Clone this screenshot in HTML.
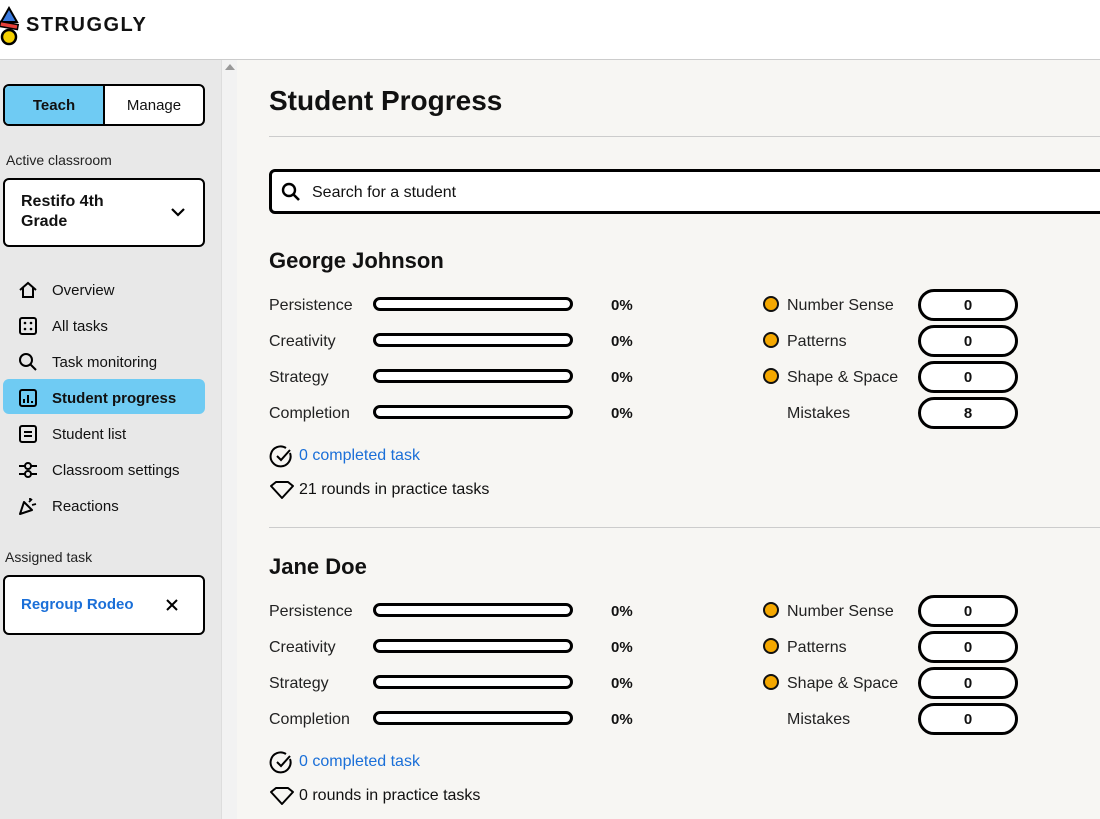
<!DOCTYPE html>
<html><head><style>
*{box-sizing:border-box;margin:0;padding:0}
body{width:1100px;height:819px;overflow:hidden;font-family:"Liberation Sans",sans-serif;color:#111;background:#f7f6f3;position:relative}
.a{position:absolute}
.hdr{left:0;top:0;width:1100px;height:60px;background:#fff;border-bottom:1px solid #ccc}
.side{left:0;top:60px;width:221px;height:759px;background:#e8e8e8}
.sb{left:221px;top:60px;width:16px;height:759px;background:#f2f2f2;border-left:1px solid #ddd}
.main{left:237px;top:60px;width:863px;height:759px;background:#f7f6f3}
.nav{left:18px;font-size:15px;display:flex;align-items:center;gap:14px;margin-top:1px}
.lbl{font-size:16px;color:#222;margin-top:2px}
.bar{width:200px;height:14px;border:3px solid #000;border-radius:8px;background:#fff}
.pct{font-size:15px;font-weight:bold;margin-top:1px}
.dot{width:16px;height:16px;border-radius:50%;background:#f5a800;border:2.5px solid #111;margin-top:-1px}
.pill{width:100px;height:32px;border:3px solid #000;border-radius:16px;background:#fff;text-align:center;line-height:27px;font-weight:bold;font-size:15px}
</style></head><body>
<div class="a hdr"></div>
<svg class="a" style="left:0;top:6px" width="20" height="40" viewBox="0 0 20 40"><polygon points="9,2 17,16 1,16" fill="#3b7be0" stroke="#000" stroke-width="2"/><rect x="0" y="17" width="18" height="5" fill="#e5403a" stroke="#000" stroke-width="1.5" transform="rotate(10 9 19)"/><circle cx="9" cy="31" r="7" fill="#f5d000" stroke="#000" stroke-width="2.5"/></svg>
<div class="a" style="left:26px;top:14px;font-size:20px;font-weight:900;letter-spacing:1.5px">STRUGGLY</div>
<div class="a side"></div>
<div class="a sb"><div style="margin:4px auto 0;width:0;height:0;border-left:5px solid transparent;border-right:5px solid transparent;border-bottom:6px solid #999"></div></div>
<div class="a main"></div>

<div class="a" style="left:3px;top:84px;width:202px;height:42px;border:2px solid #000;border-radius:6px;display:flex;overflow:hidden;background:#fff">
<div style="width:100px;background:#6fcbf3;border-right:2px solid #000;text-align:center;line-height:39px;font-weight:bold;font-size:15px">Teach</div>
<div style="flex:1;text-align:center;line-height:39px;font-size:15px">Manage</div></div>
<div class="a" style="left:6px;top:152px;font-size:14px;color:#222">Active classroom</div>
<div class="a" style="left:3px;top:178px;width:202px;height:69px;border:2px solid #000;border-radius:6px;background:#fff">
<div style="position:absolute;left:16px;top:12px;font-weight:bold;font-size:16px;line-height:20px">Restifo 4th<br>Grade</div>
<svg style="position:absolute;left:165px;top:26px" width="16" height="12" viewBox="0 0 16 12"><path d="M2 3l6 6 6-6" fill="none" stroke="#000" stroke-width="2.2"/></svg></div>

<div class="a" style="left:3px;top:379px;width:202px;height:35px;background:#6fcbf3;border-radius:6px"></div>
<div class="a nav" style="top:279px"><svg width="20" height="20" viewBox="0 0 20 20"><path d="M2 10L10 3l8 7M5 8v9h10V8" fill="none" stroke="#000" stroke-width="2"/></svg>Overview</div>
<div class="a nav" style="top:315px"><svg width="20" height="20" viewBox="0 0 20 20"><rect x="2" y="2" width="16" height="16" rx="2" fill="none" stroke="#000" stroke-width="2"/><circle cx="7" cy="7" r="1.3"/><circle cx="13" cy="7" r="1.3"/><circle cx="7" cy="13" r="1.3"/><circle cx="13" cy="13" r="1.3"/></svg>All tasks</div>
<div class="a nav" style="top:351px"><svg width="20" height="20" viewBox="0 0 20 20"><circle cx="8" cy="8" r="6" fill="none" stroke="#000" stroke-width="2"/><path d="M12.5 12.5L18 18" stroke="#000" stroke-width="2"/></svg>Task monitoring</div>
<div class="a nav" style="top:387px;font-weight:bold"><svg width="20" height="20" viewBox="0 0 20 20"><rect x="2" y="2" width="16" height="16" rx="2" fill="none" stroke="#000" stroke-width="2"/><path d="M6 15v-4M10 15V7M14 15v-2" stroke="#000" stroke-width="2"/></svg>Student progress</div>
<div class="a nav" style="top:423px"><svg width="20" height="20" viewBox="0 0 20 20"><rect x="2" y="2" width="16" height="16" rx="2" fill="none" stroke="#000" stroke-width="2"/><path d="M6 8h8M6 12h8" stroke="#000" stroke-width="2"/></svg>Student list</div>
<div class="a nav" style="top:459px"><svg width="20" height="20" viewBox="0 0 20 20"><path d="M1 6h18M1 14h18" stroke="#000" stroke-width="2"/><circle cx="10" cy="6" r="3" fill="#e8e8e8" stroke="#000" stroke-width="2"/><circle cx="10" cy="14" r="3" fill="#e8e8e8" stroke="#000" stroke-width="2"/></svg>Classroom settings</div>
<div class="a nav" style="top:495px"><svg width="20" height="20" viewBox="0 0 20 20"><path d="M2 18l4-12 8 8z" fill="none" stroke="#000" stroke-width="2" stroke-linejoin="round"/><path d="M11 6l3-3M14 9l4-1M12 2v2" stroke="#000" stroke-width="1.8"/></svg>Reactions</div>

<div class="a" style="left:5px;top:549px;font-size:14px;color:#222">Assigned task</div>
<div class="a" style="left:3px;top:575px;width:202px;height:60px;border:2px solid #000;border-radius:6px;background:#fff">
<div style="position:absolute;left:16px;top:19px;font-weight:bold;font-size:15px;color:#1a6fd8">Regroup Rodeo</div>
<svg style="position:absolute;left:161px;top:22px" width="12" height="12" viewBox="0 0 12 12"><path d="M1 1l10 10M11 1L1 11" stroke="#000" stroke-width="2"/></svg></div>

<div class="a" style="left:269px;top:85px;font-size:28px;font-weight:bold">Student Progress</div>
<div class="a" style="left:269px;top:136px;width:831px;height:1px;background:#ccc"></div>
<div class="a" style="left:269px;top:169px;width:840px;height:45px;border:3px solid #000;border-radius:6px;background:#fff">
<svg style="position:absolute;left:9px;top:10px" width="20" height="20" viewBox="0 0 20 20"><circle cx="8" cy="8" r="6" fill="none" stroke="#000" stroke-width="2.4"/><path d="M12.5 12.5L18 18" stroke="#000" stroke-width="2.6"/></svg>
<div style="position:absolute;left:40px;top:12px;font-size:16px">Search for a student</div></div>

<div class="a" style="left:269px;top:248px;font-size:22px;font-weight:bold">George Johnson</div>
<div class="a" style="left:269px;top:527px;width:831px;height:1px;background:#ccc"></div>
<div class="a" style="left:269px;top:554px;font-size:22px;font-weight:bold">Jane Doe</div>

<div class="a lbl" style="left:269px;top:295px">Persistence</div><div class="a bar" style="left:373px;top:297px"></div><div class="a pct" style="left:611px;top:296px">0%</div>
<div class="a lbl" style="left:269px;top:331px">Creativity</div><div class="a bar" style="left:373px;top:333px"></div><div class="a pct" style="left:611px;top:332px">0%</div>
<div class="a lbl" style="left:269px;top:367px">Strategy</div><div class="a bar" style="left:373px;top:369px"></div><div class="a pct" style="left:611px;top:368px">0%</div>
<div class="a lbl" style="left:269px;top:403px">Completion</div><div class="a bar" style="left:373px;top:405px"></div><div class="a pct" style="left:611px;top:404px">0%</div>
<div class="a dot" style="left:763px;top:297px"></div><div class="a lbl" style="left:787px;top:295px">Number Sense</div><div class="a pill" style="left:918px;top:289px">0</div>
<div class="a dot" style="left:763px;top:333px"></div><div class="a lbl" style="left:787px;top:331px">Patterns</div><div class="a pill" style="left:918px;top:325px">0</div>
<div class="a dot" style="left:763px;top:369px"></div><div class="a lbl" style="left:787px;top:367px">Shape &amp; Space</div><div class="a pill" style="left:918px;top:361px">0</div>
<div class="a lbl" style="left:787px;top:403px">Mistakes</div><div class="a pill" style="left:918px;top:397px">8</div>
<svg class="a" style="left:269px;top:444px" width="25" height="25" viewBox="0 0 25 25"><path d="M21 9A10 10 0 1 1 17 4" fill="none" stroke="#000" stroke-width="2"/><path d="M8 12l4 4 9-10" fill="none" stroke="#000" stroke-width="2"/></svg>
<div class="a" style="left:299px;top:447px;font-size:16px;color:#1a6fd8">0 completed task</div>
<svg class="a" style="left:269px;top:480px" width="26" height="20" viewBox="0 0 26 20"><path d="M2 6l5-4h12l5 4-11 12z" fill="none" stroke="#000" stroke-width="2" stroke-linejoin="round"/></svg>
<div class="a" style="left:299px;top:481px;font-size:16px">21 rounds in practice tasks</div>

<div class="a lbl" style="left:269px;top:601px">Persistence</div><div class="a bar" style="left:373px;top:603px"></div><div class="a pct" style="left:611px;top:602px">0%</div>
<div class="a lbl" style="left:269px;top:637px">Creativity</div><div class="a bar" style="left:373px;top:639px"></div><div class="a pct" style="left:611px;top:638px">0%</div>
<div class="a lbl" style="left:269px;top:673px">Strategy</div><div class="a bar" style="left:373px;top:675px"></div><div class="a pct" style="left:611px;top:674px">0%</div>
<div class="a lbl" style="left:269px;top:709px">Completion</div><div class="a bar" style="left:373px;top:711px"></div><div class="a pct" style="left:611px;top:710px">0%</div>
<div class="a dot" style="left:763px;top:603px"></div><div class="a lbl" style="left:787px;top:601px">Number Sense</div><div class="a pill" style="left:918px;top:595px">0</div>
<div class="a dot" style="left:763px;top:639px"></div><div class="a lbl" style="left:787px;top:637px">Patterns</div><div class="a pill" style="left:918px;top:631px">0</div>
<div class="a dot" style="left:763px;top:675px"></div><div class="a lbl" style="left:787px;top:673px">Shape &amp; Space</div><div class="a pill" style="left:918px;top:667px">0</div>
<div class="a lbl" style="left:787px;top:709px">Mistakes</div><div class="a pill" style="left:918px;top:703px">0</div>
<svg class="a" style="left:269px;top:750px" width="25" height="25" viewBox="0 0 25 25"><path d="M21 9A10 10 0 1 1 17 4" fill="none" stroke="#000" stroke-width="2"/><path d="M8 12l4 4 9-10" fill="none" stroke="#000" stroke-width="2"/></svg>
<div class="a" style="left:299px;top:753px;font-size:16px;color:#1a6fd8">0 completed task</div>
<svg class="a" style="left:269px;top:786px" width="26" height="20" viewBox="0 0 26 20"><path d="M2 6l5-4h12l5 4-11 12z" fill="none" stroke="#000" stroke-width="2" stroke-linejoin="round"/></svg>
<div class="a" style="left:299px;top:787px;font-size:16px">0 rounds in practice tasks</div>
</body></html>
